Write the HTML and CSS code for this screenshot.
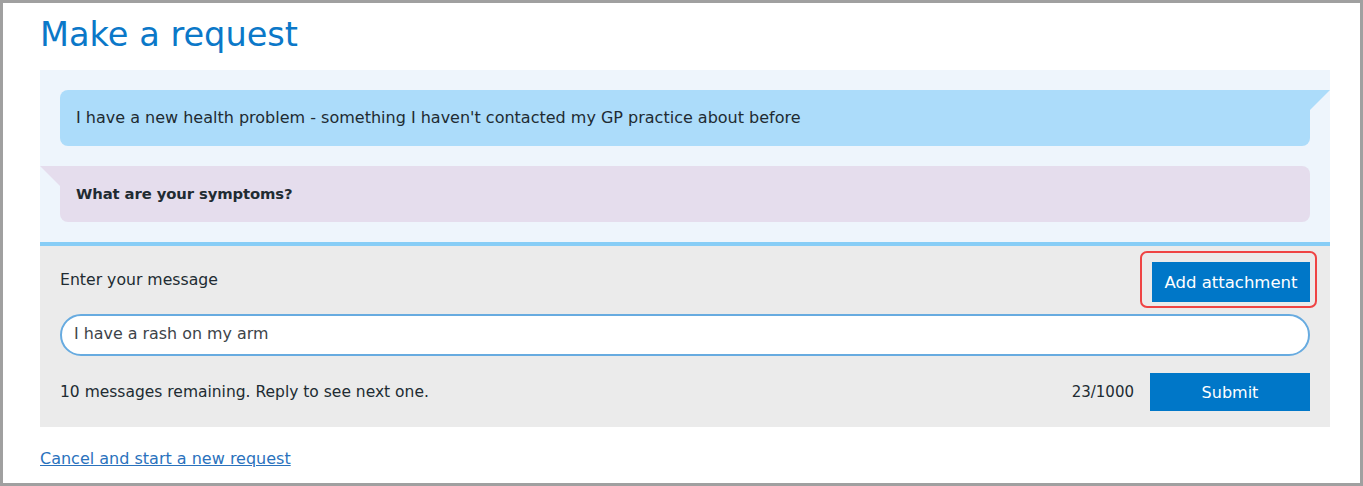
FILE: index.html
```html
<!DOCTYPE html>
<html lang="en">
<head>
    <meta charset="UTF-8">
    <meta name="viewport" content="width=device-width, initial-scale=1.0">
    <title>Make a request</title>
    <link rel="stylesheet" href="styles.css">
</head>
<body>
    <div class="frame">
        <h1>Make a request</h1>

        <div class="conversation">
            <div class="bubble bubble-user">I have a new health problem - something I haven't contacted my GP practice about before</div>
            <div class="bubble bubble-bot"><strong>What are your symptoms?</strong></div>
        </div>

        <div class="composer">
            <div class="composer-top">
                <label for="message">Enter your message</label>
                <div class="highlight">
                    <button class="btn btn-attach">Add attachment</button>
                </div>
            </div>
            <input type="text" id="message" class="message-input" value="I have a rash on my arm">
            <div class="composer-bottom">
                <span class="remaining">10 messages remaining. Reply to see next one.</span>
                <div class="submit-group">
                    <span class="counter">23/1000</span>
                    <button class="btn btn-submit">Submit</button>
                </div>
            </div>
        </div>

        <a href="#" class="cancel-link">Cancel and start a new request</a>
    </div>
</body>
</html>
```
FILE: styles.css
```css
html, body {
    margin: 0;
    padding: 0;
}

body {
    font-family: "DejaVu Sans", sans-serif;
    font-size: 16px;
    color: #212b32;
    background-color: #ffffff;
}

.frame {
    box-sizing: border-box;
    width: 1363px;
    height: 486px;
    border: 3px solid #a0a0a0;
    padding: 0 30px 0 37px;
    overflow: hidden;
}

h1 {
    margin: 0;
    padding-top: 12px;
    height: 67px;
    box-sizing: border-box;
    font-weight: normal;
    font-size: 33.6px;
    line-height: 40px;
    color: #0b78c8;
}

.conversation {
    background-color: #eef5fc;
    padding: 20px;
    display: flex;
    flex-direction: column;
    gap: 20px;
    border-bottom: 4px solid #87cdf6;
}

.bubble {
    position: relative;
    height: 56px;
    box-sizing: border-box;
    padding: 0 16px 2px;
    display: flex;
    align-items: center;
    border-radius: 8px;
    font-size: 16px;
}

.bubble-user {
    background-color: #acdcfa;
    border-top-right-radius: 0;
}

.bubble-user::after {
    content: "";
    position: absolute;
    top: 0;
    right: -20px;
    border-top: 20px solid #acdcfa;
    border-right: 20px solid transparent;
}

.bubble-bot {
    background-color: #e5dded;
    border-top-left-radius: 0;
}

.bubble-bot::before {
    content: "";
    position: absolute;
    top: 0;
    left: -20px;
    border-top: 20px solid #e5dded;
    border-left: 20px solid transparent;
}

.bubble-bot strong {
    font-weight: bold;
    font-size: 14.8px;
    letter-spacing: -0.1px;
}

.composer {
    background-color: #ebebeb;
    padding: 16px 20px;
}

.composer-top {
    display: flex;
    justify-content: space-between;
    align-items: center;
    height: 40px;
}

.composer-top label {
    font-size: 15.7px;
    margin-bottom: 6px;
}

.highlight {
    position: relative;
}

.highlight::after {
    content: "";
    position: absolute;
    left: -12px;
    top: -11px;
    right: -7px;
    bottom: -6px;
    border: 2px solid #ef4444;
    border-radius: 7px;
}

.btn {
    font-family: "DejaVu Sans", sans-serif;
    color: #ffffff;
    background-color: #0077c8;
    border: none;
    padding: 0;
    cursor: pointer;
}

.btn-attach {
    width: 158px;
    height: 40px;
    font-size: 16.5px;
}

.message-input {
    display: block;
    box-sizing: border-box;
    width: 100%;
    height: 42px;
    margin-top: 12px;
    padding: 0 12px 3px;
    border: 2px solid #67abe0;
    border-radius: 21px;
    font-family: "DejaVu Sans", sans-serif;
    font-size: 15.9px;
    color: #3d4449;
    background-color: #ffffff;
    outline: none;
}

.composer-bottom {
    display: flex;
    justify-content: space-between;
    align-items: center;
    margin-top: 17px;
    height: 38px;
    font-size: 15px;
}

.remaining {
    font-size: 15.5px;
}

.submit-group {
    display: flex;
    align-items: center;
    gap: 16px;
}

.btn-submit {
    width: 160px;
    height: 38px;
    font-size: 16px;
}

.cancel-link {
    display: inline-block;
    margin-top: 22px;
    color: #2a72bd;
    font-size: 16px;
}
```
